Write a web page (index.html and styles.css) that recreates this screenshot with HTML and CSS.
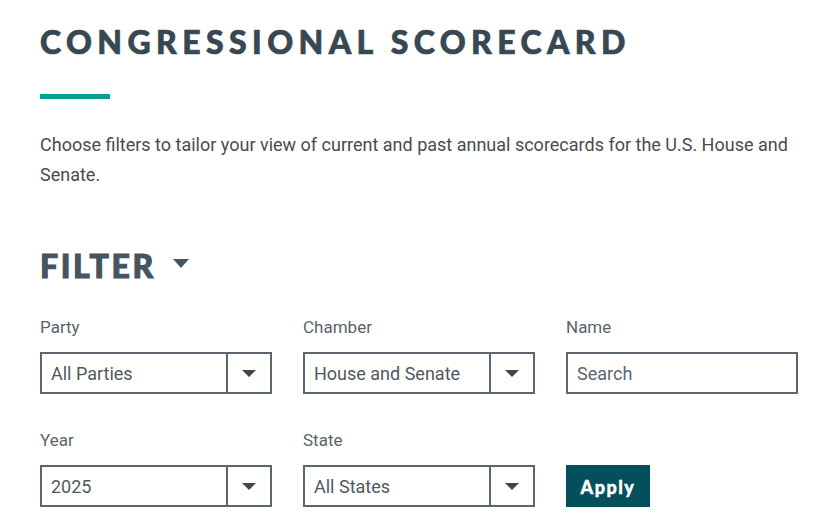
FILE: index.html
```html
<!DOCTYPE html>
<html lang="en">
<head>
<meta charset="utf-8">
<title>Congressional Scorecard</title>
<link rel="stylesheet" href="styles.css">
</head>
<body>
<main class="page">
  <h1 class="title">CONGRESSIONAL SCORECARD</h1>
  <div class="accent"></div>
  <p class="intro">Choose filters to tailor your view of current and past annual scorecards for the U.S. House and Senate.</p>

  <h2 class="filter-heading">FILTER <span class="caret"></span></h2>

  <form class="filters">
    <div class="field">
      <label class="label">Party</label>
      <div class="select"><span class="value">All Parties</span><span class="arrow"><span class="tri"></span></span></div>
    </div>
    <div class="field">
      <label class="label">Chamber</label>
      <div class="select"><span class="value">House and Senate</span><span class="arrow"><span class="tri"></span></span></div>
    </div>
    <div class="field">
      <label class="label">Name</label>
      <div class="input"><span class="placeholder">Search</span></div>
    </div>
    <div class="field">
      <label class="label">Year</label>
      <div class="select"><span class="value">2025</span><span class="arrow"><span class="tri"></span></span></div>
    </div>
    <div class="field">
      <label class="label">State</label>
      <div class="select"><span class="value">All States</span><span class="arrow"><span class="tri"></span></span></div>
    </div>
    <div class="field field-button">
      <button type="button" class="apply">Apply</button>
    </div>
  </form>
</main>
</body>
</html>
```
FILE: styles.css
```css
* { box-sizing: border-box; }
html, body { margin: 0; padding: 0; background: #fff; }
body { font-family: Roboto, "Liberation Sans", sans-serif; color: #4a4a4a; }
.page { padding: 24px 40px 0 40px; width: 840px; }
.title {
  margin: 0;
  font-family: Lato, sans-serif;
  font-weight: 900;
  font-size: 32px;
  line-height: 36px;
  letter-spacing: 5.4px;
  color: #384852;
  -webkit-text-stroke: 0.7px #384852;
}
.accent { width: 70px; height: 5px; background: #079e94; margin-top: 34px; }
.intro {
  margin: 31px 0 0 0;
  font-size: 18px;
  line-height: 30px;
  color: #4b4b4b;
  width: 770px;
}
.filter-heading {
  margin: 58px 0 0 0;
  font-family: Lato, sans-serif;
  font-weight: 900;
  font-size: 32px;
  line-height: 36px;
  letter-spacing: 2.6px;
  color: #45545e;
  -webkit-text-stroke: 1px #45545e;
  display: flex;
  align-items: center;
}
.caret {
  display: inline-block;
  width: 0; height: 0;
  border-left: 8px solid transparent;
  border-right: 8px solid transparent;
  border-top: 9px solid #45545e;
  margin-left: 17px;
  margin-top: -6px;
}
.filters {
  display: grid;
  grid-template-columns: 232px 232px 232px;
  column-gap: 31px;
  row-gap: 35px;
  margin-top: 32px;
}
.field { display: flex; flex-direction: column; }
.label { font-size: 17px; line-height: 22px; color: #5a646b; margin-bottom: 14px; }
.select, .input {
  height: 42px;
  border: 2px solid #5b6670;
  display: flex;
  align-items: stretch;
  background: #fff;
}
.value, .placeholder {
  flex: 1;
  display: flex;
  align-items: center;
  padding-left: 9px;
  font-size: 18px;
  color: #4f5960;
}
.placeholder { color: #5d676e; }
.arrow {
  width: 44px;
  border-left: 2px solid #5b6670;
  display: flex;
  align-items: center;
  justify-content: center;
}
.tri {
  width: 0; height: 0;
  border-left: 7px solid transparent;
  border-right: 7px solid transparent;
  border-top: 7px solid #454545;
}
.field-button { justify-content: flex-end; }
.apply {
  width: 84px;
  height: 44px;
  border: 0;
  background: #034f5b;
  color: #fff;
  font-family: Lato, sans-serif;
  font-weight: 900;
  font-size: 18px;
  letter-spacing: 1.5px;
  -webkit-text-stroke: 0.4px #fff;
  padding: 0;
  margin-bottom: -2px;
}
```
